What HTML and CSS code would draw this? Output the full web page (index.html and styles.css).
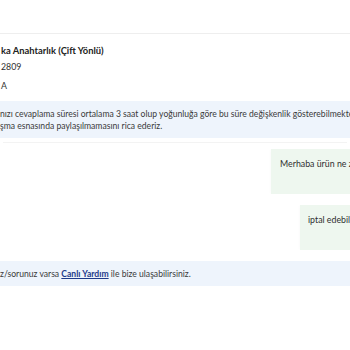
FILE: index.html
```html
<!DOCTYPE html>
<html lang="tr">
<head>
<meta charset="utf-8">
<link rel="stylesheet" href="styles.css">
</head>
<body>
<div class="page">
  <div class="topbar"></div>
  <section class="info">
    <div class="title">ka Anahtarlık (Çift Yönlü)</div>
    <div class="line">2809</div>
    <div class="line line3">A</div>
  </section>
  <div class="notice notice-top">
    <p>nızı cevaplama süresi ortalama 3 saat olup yoğunluğa göre bu süre değişkenlik gösterebilmektedir.</p>
    <p>şma esnasında paylaşılmamasını rica ederiz.</p>
  </div>
  <section class="chat">
    <div class="row">
      <div class="bubble b1">Merhaba ürün ne zaman gönderilecek?</div>
    </div>
    <div class="row">
      <div class="bubble b2">iptal edebilir miyim?</div>
    </div>
  </section>
  <div class="notice notice-bottom">
    <p>z/sorunuz varsa <a href="#" class="link">Canlı Yardım</a> ile bize ulaşabilirsiniz.</p>
  </div>
</div>
</body>
</html>
```
FILE: styles.css
```css
html, body {
  margin: 0;
  padding: 0;
  background: #ffffff;
  overflow: hidden;
}
body {
  font-family: "Lato", "Noto Sans", sans-serif;
  color: #2f2f2f;
  width: 350px;
  height: 350px;
}
.page {
  width: 350px;
}
.topbar {
  height: 33px;
  border-bottom: 1px solid #eeeeee;
}
.info {
  padding-top: 9px;
  padding-left: 1px;
}
.title {
  font-size: 9.4px;
  font-weight: 700;
  line-height: 16px;
  white-space: nowrap;
  color: #222222;
}
.line {
  font-size: 8.8px;
  line-height: 16px;
  white-space: nowrap;
}
.line3 {
  margin-top: 3px;
}
.notice {
  background: #eef4fc;
  font-size: 8.6px;
  line-height: 12px;
  white-space: nowrap;
  overflow: hidden;
  color: #3a3a3a;
}
.notice p {
  margin: 0;
}
.notice-top {
  margin-top: 7px;
  padding: 7px 0 6px 0;
  border-bottom: 4px solid #ffffff;
  box-shadow: 0 4px 0 -3px #f3f3f3;
}
.chat {
  padding-top: 7px;
  display: flex;
  flex-direction: column;
  gap: 11px;
}
.row {
  display: flex;
  overflow: hidden;
}
.bubble {
  background: #eef7ef;
  font-size: 8.8px;
  line-height: 12px;
  white-space: nowrap;
  height: 45px;
  box-sizing: border-box;
  padding-top: 9px;
  padding-left: 9px;
  color: #2f2f2f;
  box-shadow: 0 0 3px rgba(0,0,0,0.03);
}
.b1 {
  margin-left: 271px;
}
.b2 {
  margin-left: 300px;
  padding-left: 8px;
}
.notice-bottom {
  margin-top: 11px;
  padding: 7px 0 6px 0;
  font-size: 8.6px;
}
.link {
  color: #1e3a8a;
  font-weight: 700;
  text-decoration: underline;
}
```
